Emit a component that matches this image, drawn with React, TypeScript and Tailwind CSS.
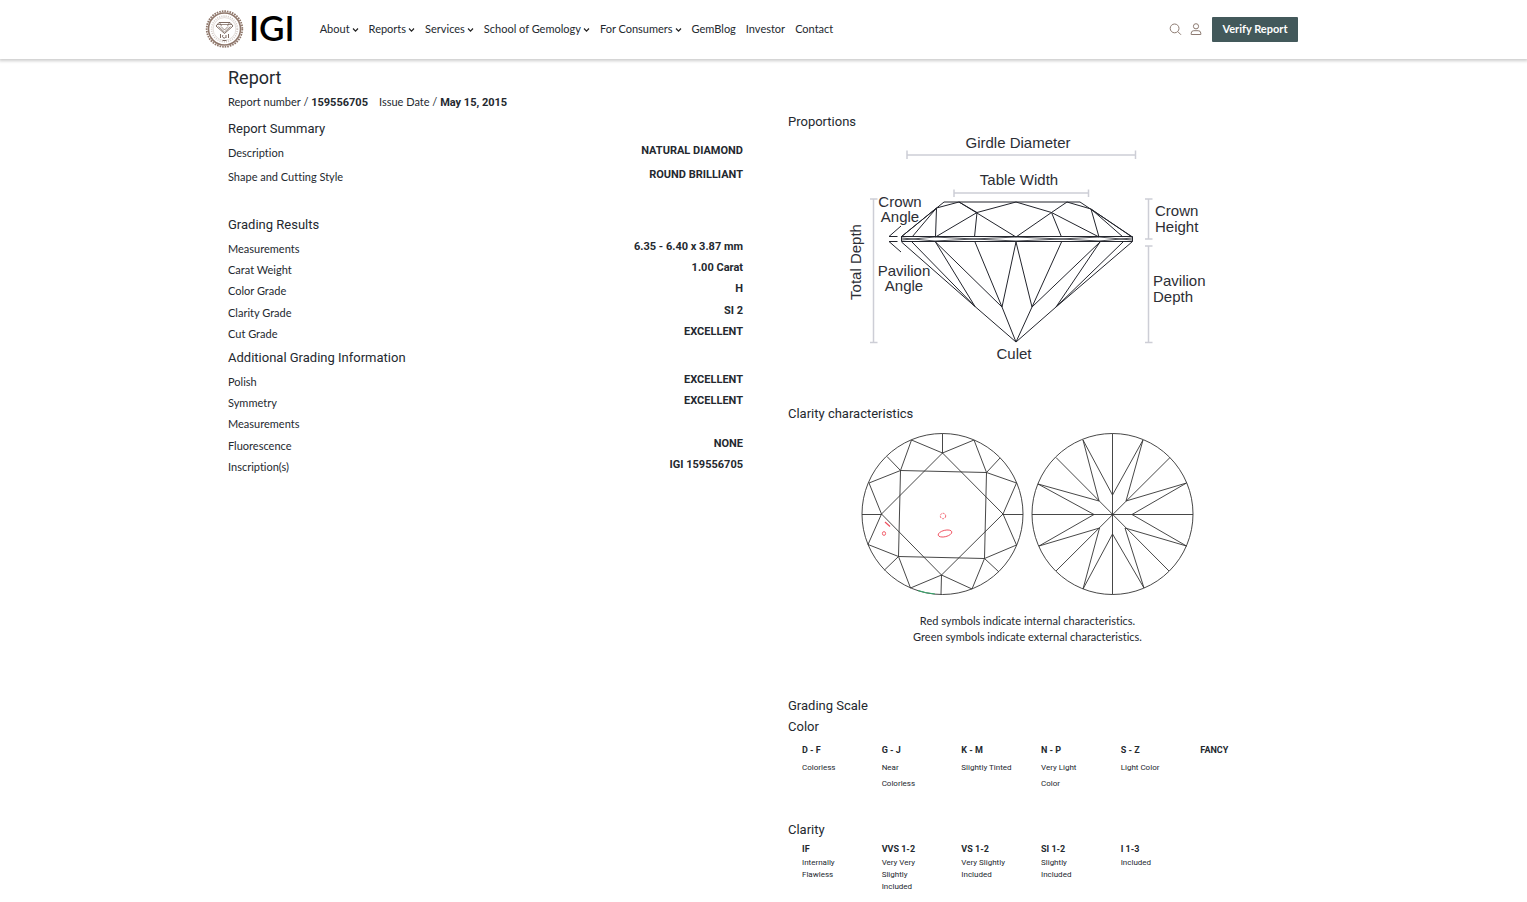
import React from 'react';

type Row = { label: string; value: string };
type Grade = { grade: string; text: string };

const navItems = [
  { label: 'About', menu: true },
  { label: 'Reports', menu: true },
  { label: 'Services', menu: true },
  { label: 'School of Gemology', menu: true },
  { label: 'For Consumers', menu: true },
  { label: 'GemBlog', menu: false },
  { label: 'Investor', menu: false },
  { label: 'Contact', menu: false },
];

const summary: Row[] = [
  { label: 'Description', value: 'NATURAL DIAMOND' },
  { label: 'Shape and Cutting Style', value: 'ROUND BRILLIANT' },
];

const results: Row[] = [
  { label: 'Measurements', value: '6.35 - 6.40 x 3.87 mm' },
  { label: 'Carat Weight', value: '1.00 Carat' },
  { label: 'Color Grade', value: 'H' },
  { label: 'Clarity Grade', value: 'SI 2' },
  { label: 'Cut Grade', value: 'EXCELLENT' },
];

const additional: Row[] = [
  { label: 'Polish', value: 'EXCELLENT' },
  { label: 'Symmetry', value: 'EXCELLENT' },
  { label: 'Measurements', value: '' },
  { label: 'Fluorescence', value: 'NONE' },
  { label: 'Inscription(s)', value: 'IGI 159556705' },
];

const colorScale: Grade[] = [
  { grade: 'D - F', text: 'Colorless' },
  { grade: 'G - J', text: 'Near\nColorless' },
  { grade: 'K - M', text: 'Slightly Tinted' },
  { grade: 'N - P', text: 'Very Light\nColor' },
  { grade: 'S - Z', text: 'Light Color' },
  { grade: 'FANCY', text: '' },
];

const clarityScale: Grade[] = [
  { grade: 'IF', text: 'Internally\nFlawless' },
  { grade: 'VVS 1-2', text: 'Very Very\nSlightly\nIncluded' },
  { grade: 'VS 1-2', text: 'Very Slightly\nIncluded' },
  { grade: 'SI 1-2', text: 'Slightly\nIncluded' },
  { grade: 'I 1-3', text: 'Included' },
];

const Logo = () => (
  <a href="#" aria-label="IGI" className="flex items-center gap-1 text-black">
    <svg width="40" height="40" viewBox="0 0 40 40" fill="none" stroke="#8f776b">
      <circle cx="19.5" cy="19" r="17.8" strokeWidth="1.8" strokeDasharray="1.6 1" />
      <circle cx="19.5" cy="19" r="16" strokeWidth="1.6" />
      <circle cx="19.5" cy="19" r="12.9" strokeWidth="1.6" strokeDasharray="1 1.2" opacity="0.4" />
      <circle cx="19.5" cy="19" r="11.4" strokeWidth="0.5" opacity="0.5" />
      <g stroke="#6f5a50">
        <path d="M14 12.5h11l3 3.5L19.5 23.5 11 16z" strokeWidth="0.9" />
        <path d="M12 14.5h15M13.5 16.5l6 5.5 6-5.5M16 16.5l3.5 3.5 3.500-3.500M14.5 12.5l2 3.5M24.5 12.5l-2 3.5" strokeWidth="0.7" />
        <path d="M15.5 24v4M18 25a1.700 1.700 0 1 0 2.500 2.500M21 25v3M23.5 24v4M17.5 30.5h4" strokeWidth="0.9" />
      </g>
    </svg>
    <span className="pb-1.5 font-['Lato',sans-serif] text-[35px] leading-[36px] font-semibold">
      IGI
    </span>
  </a>
);

const Header = () => (
  <header className="relative bg-white pr-6 shadow-[0_1px_3px_1px_rgba(0,0,0,0.2)]">
    <div className="mx-auto flex h-[59px] max-w-[1093px] items-center">
      <Logo />
      <nav className="ml-[25px] flex items-center gap-2.5 text-[11px]">
        {navItems.map((item) => (
          <a key={item.label} href="#" className="flex items-center gap-0.5 whitespace-nowrap">
            {item.label}
            {item.menu && (
              <svg width="7" height="6" viewBox="0 0 7 6" fill="none" stroke="#222" strokeWidth="1.2">
                <path d="M1 1.500L3.500 4.200 6 1.500" />
              </svg>
            )}
          </a>
        ))}
      </nav>
      <div className="ml-auto flex items-center">
        <button aria-label="Search" className="mr-2">
          <svg width="13" height="13" viewBox="0 0 13 13" fill="none" stroke="#8d7b72">
            <circle cx="5.600" cy="5.400" r="4.400" />
            <path d="M8.800 8.600l3.200 3.200" />
          </svg>
        </button>
        <button aria-label="Account" className="mr-2.5">
          <svg width="12" height="13" viewBox="0 0 12 13" fill="none" stroke="#8d7b72">
            <circle cx="6" cy="3.300" r="2.600" />
            <path d="M1.200 11.500V10.100a2.600 2.600 0 0 1 2.600-2.400h4.400a2.600 2.600 0 0 1 2.600 2.400V11.500z" />
          </svg>
        </button>
        <button className="h-[25px] w-[86px] rounded-[1px] bg-[#43595b] text-[11px] font-bold text-white">
          Verify Report
        </button>
      </div>
    </div>
  </header>
);

const SectionTitle = ({ children }: { children: React.ReactNode }) => (
  <h2 className="font-['Roboto',sans-serif] text-[13px] leading-6">{children}</h2>
);

const DetailTable = ({ rows, className }: { rows: Row[]; className: string }) => (
  <table className={`w-full text-[11px] leading-4 ${className}`}>
    <tbody>
      {rows.map((row) => (
        <tr key={row.label} className="h-5">
          <th className="p-0 text-left font-normal">{row.label}</th>
          <td className="p-0 pb-1 text-right font-['Roboto',sans-serif] font-bold">{row.value}</td>
        </tr>
      ))}
    </tbody>
  </table>
);

const ProportionsDiagram = () => (
  <svg width="375" height="232" viewBox="0 3 375 232" fill="none">
    <g stroke="#cdced6" strokeWidth="1.5">
      <path d="M67 25H295.500M67 20.500V29M295.500 20.500V29" />
      <path d="M114 63H248.500M114 59.500V67M248.500 59.500V67" />
      <path d="M33.500 69V212.500M30 69H37.500M30 212.500H37.500" />
      <path d="M308.500 69V109M305 69H312.500M305 109H312.500" />
      <path d="M308.500 116V212.500M305 116H312.500M305 212.500H312.500" />
    </g>
    <g stroke="#22242c" strokeLinejoin="round">
      {/* crown */}
      <path d="M61 107L104 72H240L292.500 107" />
      <path d="M72 107L96.500 78L119 72L176 107L211.500 82.500L227 72L251 79L283 107" />
      <path d="M96.500 78L95.500 107L137 82.500L176 72L211.500 82.500L259 107L251 79L292 107" />
      <path d="M61 107L96.500 78M119 72L137 82.500L134.500 107M211.500 82.500L221.500 107" />
      {/* girdle */}
      <path d="M61.500 106.500H292.500V111.500H61.500Z" />
      <path d="M61.500 110L95 107L134 109L176 107L221 109L259 107L292 110M61.500 108L95 111L134 109L176 111L221 109L259 111L292 108" strokeWidth="0.8" />
      {/* pavilion */}
      <path d="M61.500 112L135 176.500L176 212L216 177L292.500 111.500" />
      <path d="M72 112L135 176.500L95.500 112L162 177L135 112M162 177L176 112L192 177L221.500 112M192 177L260 112L216 177L283 112" />
      <path d="M162 177L176 212L192 177" />
      <path d="M61 96L49 106.500H57.500M57.500 111.500H49L61 122" />
    </g>
    <g fill="#2c2e35" fontSize="15" className="font-['Liberation_Sans',Arial,sans-serif]">
      <text x="178" y="18" textAnchor="middle">Girdle Diameter</text>
      <text x="179" y="55" textAnchor="middle">Table Width</text>
      <text x="60" y="77" textAnchor="middle">Crown</text>
      <text x="60" y="92" textAnchor="middle">Angle</text>
      <text x="64" y="146" textAnchor="middle">Pavilion</text>
      <text x="64" y="161" textAnchor="middle">Angle</text>
      <text x="315" y="86">Crown</text>
      <text x="315" y="102">Height</text>
      <text x="313" y="156">Pavilion</text>
      <text x="313" y="172">Depth</text>
      <text x="174" y="229" textAnchor="middle">Culet</text>
      <text transform="translate(21 132) rotate(-90)" textAnchor="middle">Total Depth</text>
    </g>
  </svg>
);

const ClarityDiagram = () => (
  <svg width="345" height="173" viewBox="0 1 345 173" fill="none">
    <g stroke="#333" strokeWidth="0.9">
      <circle cx="87.500" cy="89" r="80.500" />
      <path d="M45.500 45.500L131.500 47.500L129.500 133.500L43.500 131.500Z" />
      <path d="M87.500 28L148 89L86.500 150L26.500 89Z" />
      <path d="M87.500 8.500V28L56.500 15L45.500 45.500L14 58L26.500 89L13 119.500L43.500 131.500L55.500 163L86.500 150L117 164L129.500 133.500L161.500 120L148 89L161.500 58L131.500 47.500L119 15L87.500 28" />
      <path d="M45.500 45.500L32 31.500M131.500 47.500L145 33M129.500 133.500L144 147M43.500 131.500L29.500 145M86.500 150L86 169.500M7 89.500H26.500M148 89.500H168" />
    </g>
    <g stroke="#f0505f" strokeWidth="0.9">
      <circle cx="88" cy="91" r="2.700" strokeDasharray="2 1" />
      <ellipse cx="90" cy="108.500" rx="7" ry="3.200" transform="rotate(-14 90 108.500)" />
      <ellipse cx="29" cy="108.500" rx="1.600" ry="1.900" />
      <path d="M30 97L35 101.500" strokeWidth="1.2" />
    </g>
    <path d="M63 165.500Q71 168.500 80 169" stroke="#3aa76d" strokeWidth="1.2" />
    <g transform="translate(170 0)" stroke="#333" strokeWidth="0.9">
      <circle cx="87.500" cy="89" r="80.500" />
      <path d="M87.500 8.500V169.500M7 89.500H168M31 32.500L144 146M145 32.500L31 146" />
      <path d="M58 15L87.500 70L118 15L101 76L161.500 58L107 89.500L161.500 121L100 103L119 163L87.500 109L58 164L74.500 103L14 121L69 89.500L13 59L74 76Z" />
    </g>
  </svg>
);

export default function App() {
  return (
    <div className="min-h-screen bg-white font-['Lato',sans-serif] text-[#24292f] [font-variant-ligatures:none]">
      <Header />
      <main className="mx-auto grid max-w-[1079px] grid-cols-2 gap-x-[45px] pt-[7px] pl-1">
        <section>
          <h1 className="font-['Roboto',sans-serif] text-[18px] leading-6">Report</h1>
          <p className="flex gap-[11px] text-[11px] leading-6">
            <span>
              Report number / <b className="font-['Roboto',sans-serif]">159556705</b>
            </span>
            <span>
              Issue Date / <b className="font-['Roboto',sans-serif]">May 15, 2015</b>
            </span>
          </p>
          <div className="mt-0.5">
            <SectionTitle>Report Summary</SectionTitle>
            <DetailTable rows={summary} className="h-12" />
          </div>
          <div className="mt-6">
            <SectionTitle>Grading Results</SectionTitle>
            <DetailTable rows={results} className="mt-px h-[107px]" />
          </div>
          <div className="mt-px">
            <SectionTitle>Additional Grading Information</SectionTitle>
            <DetailTable rows={additional} className="mt-px h-[107px]" />
          </div>
        </section>

        <section className="pt-11">
          <SectionTitle>Proportions</SectionTitle>
          <div className="-mt-px flex justify-center pr-9">
            <ProportionsDiagram />
          </div>
          <div className="mt-[37px]">
            <SectionTitle>Clarity characteristics</SectionTitle>
            <div className="flex justify-center pr-9">
              <ClarityDiagram />
            </div>
          </div>
          <p className="mt-3.5 pr-9 text-center text-[11px] leading-4">
            Red symbols indicate internal characteristics.
            <br />
            Green symbols indicate external characteristics.
          </p>

          <div className="mt-[50px] font-['Roboto',sans-serif]">
            <h2 className="text-[13px] leading-[21px]">Grading Scale</h2>
            <h3 className="text-[13px] leading-[21px]">Color</h3>
            <dl className="mt-[5px] grid grid-cols-6 pr-[23px] pl-[14px]">
              {colorScale.map((item) => (
                <div key={item.grade}>
                  <dt className="text-[9px] leading-4 font-bold">{item.grade}</dt>
                  <dd className="mt-0.5 text-[8px] leading-4 whitespace-pre-line">{item.text}</dd>
                </div>
              ))}
            </dl>
            <h3 className="mt-[27px] text-[13px] leading-[21px]">Clarity</h3>
            <dl className="mt-px grid grid-cols-6 pr-[23px] pl-[14px]">
              {clarityScale.map((item) => (
                <div key={item.grade}>
                  <dt className="text-[9px] leading-4 font-bold">{item.grade}</dt>
                  <dd className="text-[8px] leading-3 whitespace-pre-line">{item.text}</dd>
                </div>
              ))}
            </dl>
          </div>
        </section>
      </main>
    </div>
  );
}
